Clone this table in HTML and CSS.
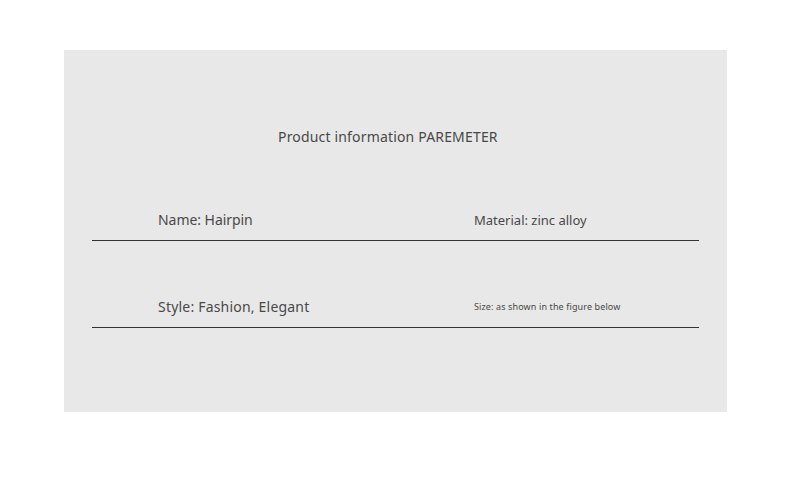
FILE: index.html
```html
<!DOCTYPE html>
<html>
<head>
<meta charset="utf-8">
<link rel="stylesheet" href="styles.css">
</head>
<body>
<div class="panel">
  <div class="title">Product information PAREMETER</div>
  <div class="row row1">
    <div class="cell name">Name: Hairpin</div>
    <div class="cell material">Material: zinc alloy</div>
  </div>
  <div class="row row2">
    <div class="cell style">Style: Fashion, Elegant</div>
    <div class="cell small">Size: as shown in the figure below</div>
  </div>
</div>
</body>
</html>
```
FILE: styles.css
```css
html, body { margin: 0; padding: 0; background: #fff; }
body { font-family: "Noto Sans", "Open Sans", sans-serif; color: #484848; }
.panel {
  margin: 50px 0 0 64px;
  width: 663px;
  height: 362px;
  background: #e8e8e8;
  box-sizing: border-box;
  padding: 77px 28px 0 28px;
}
.title {
  font-size: 14px;
  line-height: 20px;
  height: 20px;
  padding-left: 186px;
  letter-spacing: 0.17px;
}
.row {
  width: 607px;
  display: grid;
  grid-template-columns: 316px 1fr;
  padding-left: 66px;
  box-sizing: border-box;
  height: 31px;
  border-bottom: 1px solid #333;
  align-items: center;
  padding-bottom: 10px;
}
.row1 { margin-top: 63px; }
.row2 { margin-top: 56px; }
.cell { font-size: 14px; line-height: 20px; }
.name { letter-spacing: -0.05px; }
.material { font-size: 13px; }
.style { letter-spacing: 0.2px; }
.cell.small { font-size: 9px; letter-spacing: 0.12px; }
```
